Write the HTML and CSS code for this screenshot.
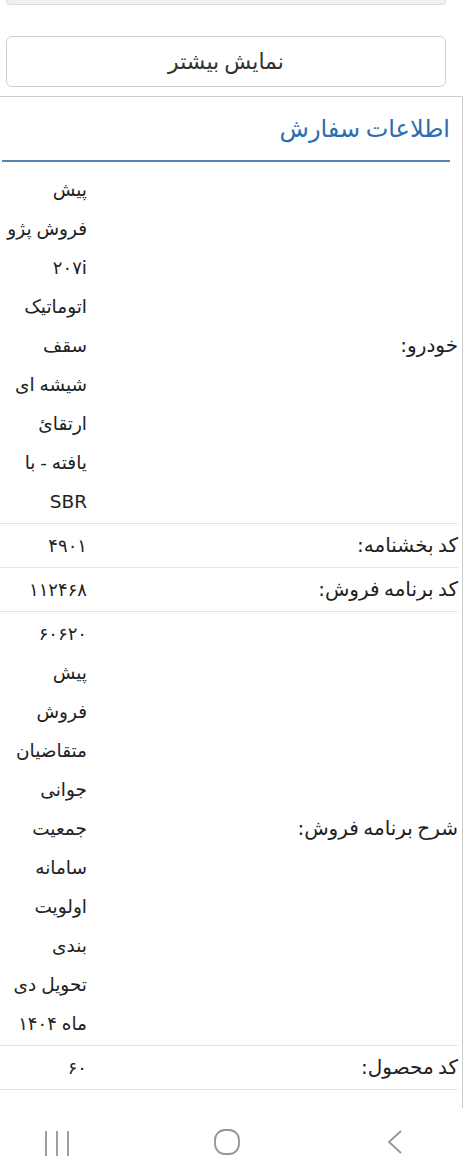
FILE: index.html
```html
<!DOCTYPE html>
<html lang="fa" dir="rtl">
<head>
<meta charset="utf-8">
<title>اطلاعات سفارش</title>
<link rel="stylesheet" href="styles.css">
</head>
<body>
<div class="screen">
  <main class="page">
    <div class="prev-box"></div>
    <button class="more" type="button">نمایش بیشتر</button>
    <section class="panel">
      <h2 class="panel-title">اطلاعات سفارش</h2>
      <table class="info">
        <tr>
          <th>خودرو:</th>
          <td>پیش<br>فروش پژو<br><span class="num">۲۰۷</span><span class="lat">i</span><br>اتوماتیک<br>سقف<br>شیشه ای<br>ارتقائ<br>یافته - با<br><span class="lat">SBR</span></td>
        </tr>
        <tr>
          <th>کد بخشنامه:</th>
          <td><span class="num">۴۹۰۱</span></td>
        </tr>
        <tr>
          <th>کد برنامه فروش:</th>
          <td><span class="num">۱۱۲۴۶۸</span></td>
        </tr>
        <tr>
          <th>شرح برنامه فروش:</th>
          <td><span class="num">۶۰۶۲۰</span><br>پیش<br>فروش<br>متقاضیان<br>جوانی<br>جمعیت<br>سامانه<br>اولویت<br>بندی<br>تحویل دی<br>ماه <span class="num">۱۴۰۴</span></td>
        </tr>
        <tr>
          <th>کد محصول:</th>
          <td><span class="num">۶۰</span></td>
        </tr>
        <tr>
          <th>رنگ:</th>
          <td>سفید<br>روغنی<br>متالیک</td>
        </tr>
      </table>
    </section>
  </main>
  <nav class="navbar" dir="ltr">
    <svg class="nav-icon" width="30" height="28" viewBox="0 0 30 28" aria-hidden="true">
      <path d="M4 3v25M15 3v25M26 3v25" stroke="#959595" stroke-width="1.8" fill="none"/>
    </svg>
    <svg class="nav-icon" width="30" height="28" viewBox="0 0 30 28" aria-hidden="true">
      <rect x="3" y="2" width="24" height="24" rx="10" ry="10" stroke="#959595" stroke-width="1.8" fill="none"/>
    </svg>
    <svg class="nav-icon" width="30" height="28" viewBox="0 0 30 28" aria-hidden="true">
      <path d="M20 3L8 14L20 25" stroke="#959595" stroke-width="1.8" fill="none"/>
    </svg>
  </nav>
</div>
</body>
</html>
```

FILE: styles.css
```css
* { box-sizing: border-box; }

html, body {
  margin: 0;
  padding: 0;
  background: #ffffff;
}

body {
  font-family: "DejaVu Sans", "Noto Sans", sans-serif;
  color: #222222;
  width: 471px;
  height: 1156px;
  overflow: hidden;
}

.screen {
  display: flex;
  flex-direction: column;
  height: 1156px;
}

.page {
  height: 1108px;
  overflow: hidden;
  flex: none;
}

.prev-box {
  height: 5px;
  margin: 0 25px 0 6px;
  background: #f1f1f1;
  border: 1px solid #dddddd;
  border-top: none;
  border-radius: 0 0 4px 4px;
}

.more {
  display: block;
  width: 440px;
  height: 51px;
  margin: 31px 25px 0 6px;
  padding: 0;
  background: #ffffff;
  border: 1px solid #cfcfcf;
  border-radius: 6px;
  font-family: "DejaVu Sans", sans-serif;
  font-size: 22px;
  word-spacing: -2px;
  color: #333333;
  line-height: 49px;
}

.panel {
  width: 463px;
  margin: 9px 8px 0 0;
  border-top: 1px solid #cccccc;
  border-right: 1px solid #cccccc;
  height: 1100px;
}

.panel-title {
  margin: 0 12px 0 2px;
  padding: 15px 0 14px;
  font-size: 24px;
  font-weight: normal;
  line-height: 34px;
  word-spacing: -2px;
  color: #2b6db3;
  border-bottom: 2px solid #5786b0;
}

.info {
  width: 458px;
  margin: 6px 4px 0 0;
  border-collapse: collapse;
  font-size: 20px;
  word-spacing: -2px;
}

.info tr {
  border-bottom: 1px solid #e4e4e4;
}

.info th {
  text-align: right;
  vertical-align: middle;
  font-weight: normal;
  padding: 2px 0;
  line-height: 39px;
  white-space: nowrap;
}

.info td {
  width: 87px;
  text-align: right;
  vertical-align: top;
  padding: 2px 0;
  font-size: 18.5px;
  word-spacing: -1px;
  line-height: 39px;
  white-space: nowrap;
}

.num {
  font-size: 18px;
  line-height: 1;
}

.lat {
  font-size: 18.5px;
  line-height: 1;
}

.navbar {
  height: 48px;
  flex: none;
  display: flex;
  align-items: flex-end;
  background: #ffffff;
}

.nav-icon:nth-child(1) { margin-left: 42px; }
.nav-icon:nth-child(2) { margin-left: 140px; }
.nav-icon:nth-child(3) { margin-left: 139px; }
```
